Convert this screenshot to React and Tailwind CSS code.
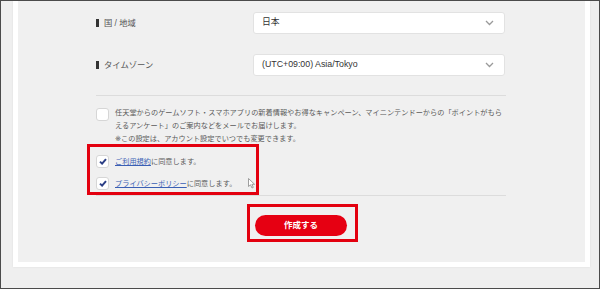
import React from "react";

const jp = { fontFamily: '"Liberation Sans", "Noto Sans CJK JP", sans-serif' };
const cjk = { fontFamily: '"Noto Sans CJK JP", sans-serif' };

function Chevron() {
  return (
    <svg width="9" height="6" viewBox="0 0 9 6" className="mr-[10px]">
      <path d="M1 1 L4.5 4.5 L8 1" fill="none" stroke="#9a9a9a" strokeWidth="1.3" />
    </svg>
  );
}

function Select({ children }) {
  return (
    <div className="w-[252px] h-[22px] bg-white border border-[#e2e2e2] rounded-[3px] flex items-center justify-between pl-[8px] text-[8.8px] text-[#333]">
      <span>{children}</span>
      <Chevron />
    </div>
  );
}

function Row({ label, value }) {
  return (
    <div className="flex items-center h-[22px]">
      <div className="w-[157px] flex items-center gap-[5px]">
        <div className="w-[3px] h-[8px] bg-[#333]" />
        <span className="text-[8.3px] text-[#555]">{label}</span>
      </div>
      <Select>{value}</Select>
    </div>
  );
}

function Box({ checked }) {
  return (
    <div className="w-[13px] h-[13px] shrink-0 bg-white border border-[#d6d6d6] rounded-[3px] flex items-center justify-center">
      {checked && (
        <svg width="8" height="7" viewBox="0 0 8 7">
          <path d="M1 3.6 L3.1 5.6 L7 1.2" fill="none" stroke="#2c3f86" strokeWidth="2" />
        </svg>
      )}
    </div>
  );
}

export default function App() {
  return (
    <div className="w-[600px] h-[289px] border border-[#4b4b4b] bg-[#efefef] overflow-hidden" style={jp}>
      <div className="relative ml-[12px] w-[577px] h-[266px] bg-[#f0f0f0] border-[5px] border-t-0 border-white shadow-[0_0_2px_rgba(0,0,0,0.08)]">
        <div className="ml-[78px] w-[410px] pt-[11px] flex flex-col">
          <Row label="国 / 地域" value="日本" />
          <div className="h-[20px]" />
          <Row label="タイムゾーン" value="(UTC+09:00) Asia/Tokyo" />
          <div className="mt-[19px] h-px bg-[#dcdcdc]" />
          <div className="mt-[10px] flex gap-[6px] text-[7.2px] leading-[13px] text-[#5a5a5a]" style={cjk}>
            <div className="mt-[2px]"><Box /></div>
            <div className="w-[392px]">
              <p className="whitespace-nowrap">任天堂からのゲームソフト・スマホアプリの新着情報やお得なキャンペーン、マイニンテンドーからの「ポイントがもら</p>
              <p>えるアンケート」のご案内などをメールでお届けします。</p>
              <p><span className="text-[#5a5a5a] font-['DejaVu_Sans']">※</span>この設定は、アカウント設定でいつでも変更できます。</p>
            </div>
          </div>
          <div className="mt-[5px] flex flex-col text-[7.2px] text-[#5a5a5a]" style={cjk}>
            <div className="flex items-center gap-[6px] h-[22px]">
              <Box checked />
              <span><span className="text-[#3a5fb4] underline">ご利用規約</span>に同意します。</span>
            </div>
            <div className="flex items-center gap-[6px] h-[22px]">
              <Box checked />
              <span><span className="text-[#3a5fb4] underline">プライバシーポリシー</span>に同意します。</span>
            </div>
          </div>
          <div className="mt-[1px] h-px bg-[#dcdcdc]" />
          <div className="mt-[19px] flex justify-center">
            <button className="w-[92px] h-[21px] rounded-full bg-[#e60012] text-white text-[8.5px] font-bold">作成する</button>
          </div>
        </div>
        <div className="absolute left-[69px] top-[143px] w-[172px] h-[51px] border-[3px] border-[#e3000f]" />
        <div className="absolute left-[229px] top-[203px] w-[111px] h-[38px] border-[3px] border-[#e3000f]" />
        <svg className="absolute left-[230px] top-[177px]" width="8" height="11" viewBox="0 0 8 11">
          <path d="M0.5 0.5 L0.5 8.5 L2.5 6.8 L4 10 L5.3 9.4 L3.9 6.3 L6.6 6.3 Z" fill="#fff" stroke="#888" strokeWidth="0.8" />
        </svg>
      </div>
    </div>
  );
}
